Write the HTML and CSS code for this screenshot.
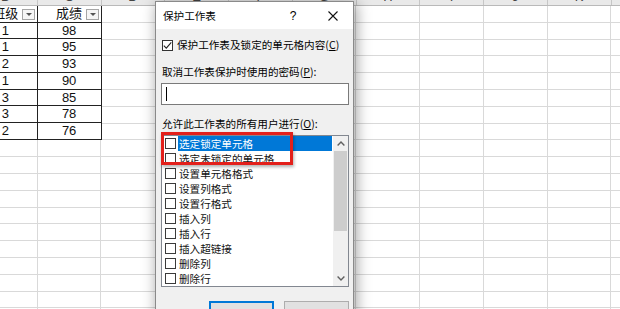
FILE: index.html
```html
<!DOCTYPE html>
<html lang="zh-CN">
<head>
  <meta charset="UTF-8" />
  <title>保护工作表</title>
  <link rel="stylesheet" href="styles.css">
</head>
<body>

  <div class="sheet">
    <div class="col-head">
      <div>B</div><div>C</div><div>D</div><div>E</div><div>F</div><div>G</div>
      <div>H</div><div>I</div><div>J</div><div>K</div><div>L</div>
    </div>
    <div class="cells">
      <div class="data">
        <div class="cell">班级<span class="filter"></span></div>
        <div class="cell">成绩<span class="filter"></span></div>
        <div class="cell">1</div><div class="cell">98</div>
        <div class="cell">1</div><div class="cell">95</div>
        <div class="cell">2</div><div class="cell">93</div>
        <div class="cell">1</div><div class="cell">90</div>
        <div class="cell">3</div><div class="cell">85</div>
        <div class="cell">3</div><div class="cell">78</div>
        <div class="cell">2</div><div class="cell">76</div>
      </div>
    </div>
  </div>

  <!-- dialog -->
  <div class="dialog">
    <div class="titlebar">
      <span class="title">保护工作表</span>
      <span class="tb-btn">?</span>
      <span class="tb-btn">
        <svg width="10" height="10" viewBox="0 0 10 10"><path d="M0.5 0.5L9.5 9.5M9.5 0.5L0.5 9.5" stroke="#111" stroke-width="1.1" fill="none"/></svg>
      </span>
    </div>

    <div class="body">
      <div class="check-row">
        <span class="box">
          <svg width="9" height="9" viewBox="0 0 9 9"><polyline points="0.8,4.6 3.3,7.2 8.3,1.4" stroke="#222" stroke-width="1.1" fill="none"/></svg>
        </span>
        <span>保护工作表及锁定的单元格内容(<u>C</u>)</span>
      </div>

      <div class="label">取消工作表保护时使用的密码(<u>P</u>):</div>
      <div class="input"><span class="caret"></span></div>

      <div class="label">允许此工作表的所有用户进行(<u>O</u>):</div>
      <div class="listbox">
        <ul class="items">
          <li class="selected"><span class="box"></span><span class="text">选定锁定单元格</span></li>
          <li><span class="box"></span><span class="text">选定未锁定的单元格</span></li>
          <li><span class="box"></span><span class="text">设置单元格格式</span></li>
          <li><span class="box"></span><span class="text">设置列格式</span></li>
          <li><span class="box"></span><span class="text">设置行格式</span></li>
          <li><span class="box"></span><span class="text">插入列</span></li>
          <li><span class="box"></span><span class="text">插入行</span></li>
          <li><span class="box"></span><span class="text">插入超链接</span></li>
          <li><span class="box"></span><span class="text">删除列</span></li>
          <li><span class="box"></span><span class="text">删除行</span></li>
        </ul>
        <div class="scrollbar">
          <div class="sb-btn">
            <svg width="8" height="5" viewBox="0 0 8 5"><polyline points="0.6,4.4 4,1 7.4,4.4" stroke="#606060" stroke-width="1.4" fill="none"/></svg>
          </div>
          <div class="thumb"></div>
          <div class="sb-btn down">
            <svg width="8" height="5" viewBox="0 0 8 5"><polyline points="0.6,0.6 4,4 7.4,0.6" stroke="#606060" stroke-width="1.4" fill="none"/></svg>
          </div>
        </div>
      </div>

      <div class="buttons">
        <button class="btn default">确定</button>
        <button class="btn">取消</button>
      </div>
    </div>

    <!-- red annotation -->
    <div class="mark"></div>
  </div>

</body>
</html>
```

FILE: styles.css
```css
* {
  box-sizing: border-box;
}

body {
  margin: 0;
  width: 620px;
  height: 309px;
  overflow: hidden;
  background: #fff;
  font-family: "Liberation Sans", "Noto Sans CJK SC", sans-serif;
}

/* spreadsheet */
.sheet {
  margin: -11.3px 0 0 -26px;
  width: 701.25px;
}

.col-head {
  display: flex;
  height: 17px;
  background: #e9e9e9;
  border-bottom: 1px solid #b9b9b9;
}

.col-head div {
  flex: none;
  width: 63.75px;
  border-right: 1px solid #c6c6c6;
  text-align: center;
  font-size: 13px;
  line-height: 16px;
  color: #444;
}

.cells {
  height: 320px;
  background:
    repeating-linear-gradient(to right, transparent 0 62.75px, #d9d9d9 62.75px 63.75px),
    repeating-linear-gradient(to bottom, transparent 0 15.8px, #d9d9d9 15.8px 16.8px);
}

.data {
  display: grid;
  grid-template-columns: 63.75px 63.75px;
  grid-auto-rows: 16.8px;
  width: 127.5px;
}

.cell {
  position: relative;
  background: #fff;
  border-right: 1px solid #222;
  border-bottom: 1px solid #222;
  text-align: center;
  font-size: 13px;
  line-height: 16px;
  color: #111;
}

.filter {
  position: absolute;
  right: 2px;
  top: 3px;
  width: 13px;
  height: 11px;
  border: 1px solid #a6a6a6;
  background: #f6f6f6;
}

.filter::after {
  content: "";
  position: absolute;
  left: 3px;
  top: 3px;
  border-left: 3px solid transparent;
  border-right: 3px solid transparent;
  border-top: 3px solid #555;
}

/* dialog */
.dialog {
  position: absolute;
  left: 155px;
  top: 1px;
  width: 199px;
  height: 330px;
  border: 1px solid #8a8a8a;
  background: #f0f0f0;
  box-shadow: 2px 2px 14px rgba(0, 0, 0, 0.4);
  font-family: "Noto Sans CJK SC", sans-serif;
  font-size: 10.6px;
  color: #000;
}

.titlebar {
  display: flex;
  align-items: center;
  height: 27px;
  background: #fff;
}

.title {
  flex: 1;
  padding-left: 7px;
  line-height: 14px;
}

.tb-btn {
  width: 40px;
  height: 27px;
  display: flex;
  align-items: center;
  justify-content: center;
  font-family: "Liberation Sans", sans-serif;
  font-size: 12px;
}

.body {
  padding: 8px 4px 0 5px;
}

.check-row {
  display: flex;
  align-items: center;
  gap: 4px;
  height: 16px;
  padding-left: 1px;
  line-height: 14px;
}

.box {
  flex: none;
  display: flex;
  align-items: center;
  justify-content: center;
  width: 11px;
  height: 11px;
  border: 1px solid #333;
  background: #fff;
}

.label {
  margin-top: 12px;
  padding-left: 1px;
  line-height: 14px;
}

.input {
  margin-top: 4px;
  height: 22px;
  border: 1px solid #7a7a7a;
  background: #fff;
}

.caret {
  display: block;
  width: 1px;
  height: 14px;
  margin: 3px 0 0 4px;
  background: #000;
}

.listbox {
  display: flex;
  margin-top: 4px;
  height: 152px;
  border: 1px solid #828790;
  background: #fff;
}

.items {
  flex: 1;
  list-style: none;
  margin: 0;
  padding: 0;
}

.items li {
  display: flex;
  align-items: center;
  height: 15px;
}

.items .box {
  margin-left: 3px;
  margin-right: 2px;
  border-color: #3a3a3a;
}

.items .text {
  flex: 1;
  height: 15px;
  line-height: 15px;
  padding-left: 1px;
  margin-right: 1px;
  color: #111;
}

.items .selected .text {
  background: #0078d7;
  color: #fff;
}

.scrollbar {
  display: flex;
  flex-direction: column;
  width: 15px;
  background: #f0f0f0;
}

.sb-btn {
  height: 15px;
  display: flex;
  align-items: center;
  justify-content: center;
}

.sb-btn.down {
  margin-top: auto;
}

.thumb {
  height: 80px;
  margin: 0 1px;
  background: #cdcdcd;
}

.buttons {
  display: flex;
  justify-content: flex-end;
  gap: 10px;
  margin-top: 14px;
}

.btn {
  width: 65px;
  height: 24px;
  border: 1px solid #adadad;
  background: #e1e1e1;
  font: inherit;
  line-height: 14px;
  padding: 10px 0 0;
}

.btn.default {
  border-color: #0078d7;
  box-shadow: inset 0 0 0 1px #0078d7;
}

.mark {
  position: absolute;
  left: 5px;
  top: 130px;
  width: 132px;
  height: 33px;
  border: 3px solid #e3201b;
  box-shadow: 1px 2px 3px rgba(0, 0, 0, 0.3);
}
```
